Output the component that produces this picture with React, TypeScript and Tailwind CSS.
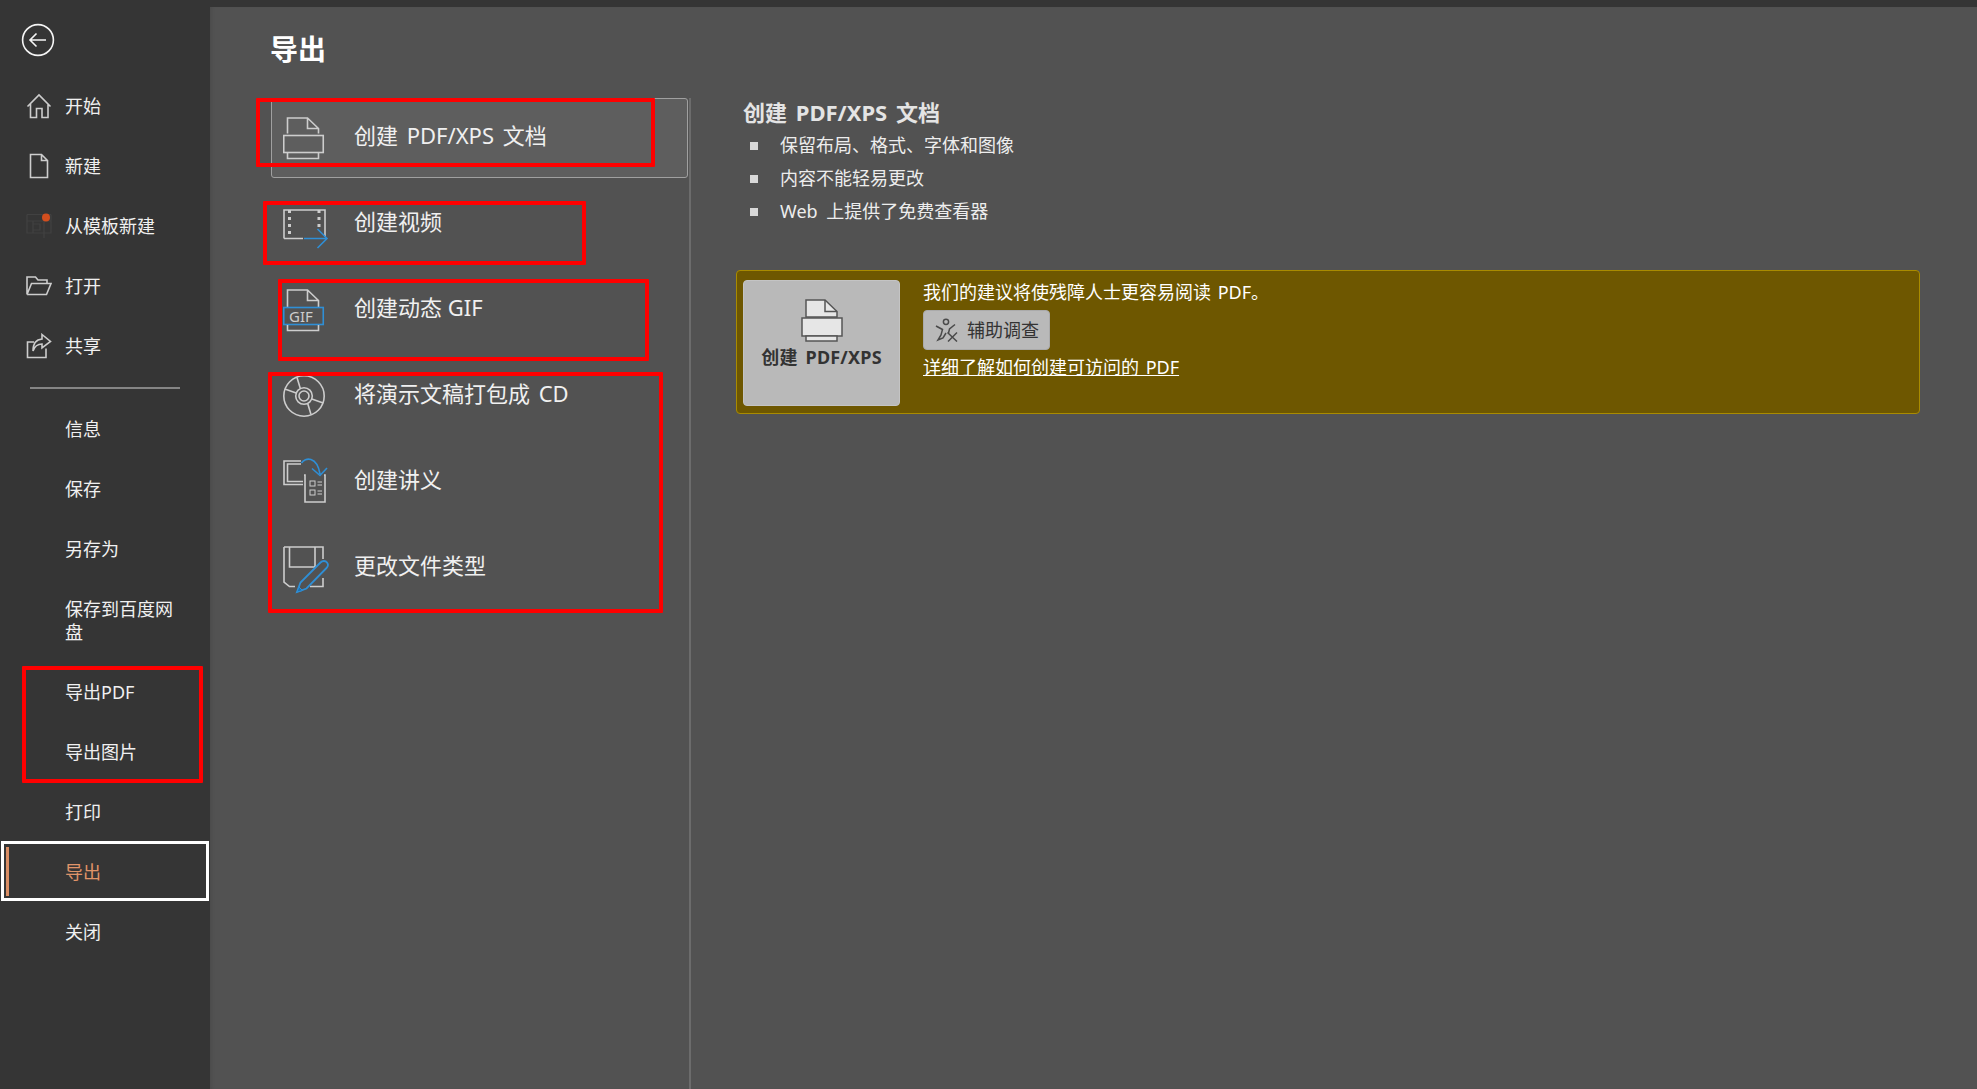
import React from "react";

const FONT = "font-['Noto_Sans','Noto_Sans_CJK_SC',sans-serif]";

const S = { fill: "none", stroke: "#cdcdcd", strokeWidth: 1.6 } as const;
const BLUE = "#2f8fd6";

function Svg({ w, h, className, children }: { w: number; h: number; className?: string; children: React.ReactNode }) {
  return (
    <svg width={w} height={h} viewBox={`0 0 ${w} ${h}`} className={className}>
      {children}
    </svg>
  );
}

const BackIcon = () => (
  <Svg w={34} h={34}>
    <circle cx="17" cy="17" r="15.4" fill="none" stroke="#f5f5f5" strokeWidth="1.6" />
    <path d="M9 17H25M15.5 10.5L9 17L15.5 23.5" fill="none" stroke="#f5f5f5" strokeWidth="1.6" />
  </Svg>
);
const HomeIcon = () => (
  <Svg w={26} h={26}>
    <path d="M1.5 13.5L13 2L24.5 13.5M4.5 11V24.5H10.5V15.5H16V24.5H22V11" {...S} />
  </Svg>
);
const DocIcon = () => (
  <Svg w={26} h={26}>
    <path d="M4.5 1.5H15.5L21.5 7.5V24.5H4.5ZM15.5 1.5V7.5H21.5" {...S} />
  </Svg>
);
const TemplateIcon = () => (
  <Svg w={26} h={26}>
    <path d="M1 1.5H25M1 8H25M1 1.5V20H25V1.5M7 8V20M18 8V25M7 11H14V17H7Z" fill="none" stroke="#414141" strokeWidth="1.2" />
    <circle cx="20" cy="4.5" r="4" fill="#d24e1e" />
  </Svg>
);
const FolderIcon = () => (
  <Svg w={26} h={20}>
    <path d="M1 18.5V1H9.5L12 4H21V7.5M1 18.5H20.5L25 7.5H5.5L1 18.5" {...S} />
  </Svg>
);
const ShareIcon = () => (
  <Svg w={26} h={26}>
    <path d="M8 9H1.5V24.5H20V15.5" {...S} />
    <path d="M16 1.5L24.5 8.5L16 15V11C11 11 8.5 13.5 7 18C7 11 10 6.5 16 6Z" {...S} />
  </Svg>
);

const PrinterIcon = () => (
  <Svg w={44} h={44}>
    <path d="M4.5 16.5V1H24.5L35.5 11.5V16.5M24.5 1V11.5H35.5" {...S} />
    <rect x="0.75" y="18.5" width="39.5" height="17" {...S} />
    <path d="M4.5 36V41.5H35.5V36" {...S} />
  </Svg>
);
const VideoIcon = () => (
  <Svg w={46} h={42}>
    <path d="M1 29.5V1H42V28M1 29.5H20" {...S} />
    <path d="M6.5 1V29M36 1V22" fill="none" stroke="#cdcdcd" strokeWidth="3" strokeDasharray="3 4" />
    <path d="M21 29.5H44M34.5 20L44 29.5L34.5 39" fill="none" stroke={BLUE} strokeWidth="1.6" />
  </Svg>
);
const GifIcon = () => (
  <Svg w={44} h={44}>
    <path d="M4.5 18V1H24.5L35.5 11.5V18M24.5 1V11.5H35.5" {...S} />
    <rect x="0.75" y="18.5" width="39.5" height="17" fill="none" stroke={BLUE} strokeWidth="1.6" />
    <path d="M4.5 36V41.5H35.5V36" {...S} />
    <text x="6" y="32.5" fontSize="15" fill="#cdcdcd" fontFamily="Noto Sans, sans-serif">GIF</text>
  </Svg>
);
const CdIcon = () => (
  <Svg w={44} h={44}>
    <circle cx="21" cy="21" r="20.2" {...S} />
    <circle cx="21" cy="21" r="8.3" {...S} />
    <circle cx="21" cy="21" r="5" {...S} />
    <path d="M14 2.5L17.3 13.5M1.8 14L13.2 18M28 39.5L24.7 28.5M40.2 28L28.8 24" {...S} />
  </Svg>
);
const HandoutIcon = () => (
  <Svg w={46} h={46}>
    <path d="M18 4H1V27.5H20" {...S} />
    <path d="M18 7H4.5V24.5H20" {...S} />
    <path d="M21 18H22V45H42V18H41" {...S} />
    <rect x="27" y="24" width="5" height="5" fill="none" stroke="#cdcdcd" strokeWidth="1" />
    <rect x="27" y="33" width="5" height="5" fill="none" stroke="#cdcdcd" strokeWidth="1" />
    <path d="M34.5 25H39M34.5 28H39M34.5 34H39M34.5 37H39" fill="none" stroke="#cdcdcd" strokeWidth="1" />
    <path d="M18.5 6C22 0 34 -1 37 17M29 11.5L37 18.5L44 11" fill="none" stroke={BLUE} strokeWidth="1.6" />
  </Svg>
);
const SaveEditIcon = () => (
  <Svg w={46} h={48}>
    <path d="M1 1H40V13M40 32V40.5H27M12 40.5H6.5L1 36V1" {...S} />
    <path d="M6.5 1V21H32V1" {...S} />
    <path d="M14 46L17.5 36.5L37.5 16.5C39.5 14.5 42.5 14.5 44 16.5C45.5 18.5 45 20.5 43.5 22L23.5 42.5Z" fill="none" stroke={BLUE} strokeWidth="1.8" />
    <path d="M14 46L16 41L19.5 44.5Z" fill="#1c6fb0" stroke={BLUE} strokeWidth="1" />
  </Svg>
);
const PrinterLight = () => (
  <Svg w={42} h={44}>
    <path d="M5 18V1H24L36 12.5V18Z" fill="#e6e6e6" stroke="#555" strokeWidth="1.5" />
    <path d="M24 1V12.5H36" fill="none" stroke="#555" strokeWidth="1.5" />
    <rect x="1" y="19" width="40" height="18" fill="#e6e6e6" stroke="#555" strokeWidth="1.5" />
    <path d="M5 37V42H36V37Z" fill="#e6e6e6" stroke="#555" strokeWidth="1.5" />
  </Svg>
);
const AccessIcon = () => (
  <Svg w={24} h={24}>
    <circle cx="11" cy="3.8" r="2.6" fill="none" stroke="#4a4a4a" strokeWidth="1.5" />
    <path d="M1 8L7.5 11.5L6 17L3 22L8 20L11 15M20 6.5L14.5 11L13.5 15" fill="none" stroke="#4a4a4a" strokeWidth="1.5" />
    <path d="M12.5 14.5L22 23.5M22 14.5L13 23.5" fill="none" stroke="#4a4a4a" strokeWidth="1.5" />
  </Svg>
);

type NavItem = { label: string; icon?: React.ReactNode; h?: string; active?: boolean };

function NavRow({ label, icon, h, active }: NavItem) {
  return (
    <div className={`relative flex items-center shrink-0 ${h ?? "h-[60px]"}`}>
      {active && <div className="absolute left-[6px] top-[5px] bottom-[6px] w-[3px] bg-[#d98d63]" />}
      {icon && <div className="absolute left-[26px] top-0 bottom-0 flex items-center">{icon}</div>}
      <span className={`pl-[65px] pr-[25px] text-[18px] leading-[23px] ${active ? "text-[#e09469]" : "text-[#f0f0f0]"}`}>
        {label}
      </span>
    </div>
  );
}

type ExportItem = { label: string; icon: React.ReactNode; offset: string; selected?: boolean; textClass?: string };

function ExportRow({ label, icon, offset, selected, textClass }: ExportItem) {
  return (
    <div
      className={`h-[80px] mb-[6px] w-[417px] flex items-start rounded-[3px] border ${
        selected ? "border-[#a0a0a0] bg-[#5e5e5e]" : "border-transparent"
      }`}
    >
      <div className={`w-[82px] pl-[11px] shrink-0 ${offset}`}>{icon}</div>
      <span className={`pt-[21px] text-[22px] leading-[30px] text-[#f0f0f0] ${textClass ?? ""}`}>{label}</span>
    </div>
  );
}

const Bullet = ({ children, textClass }: { children: React.ReactNode; textClass?: string }) => (
  <div className="flex items-center h-[33px]">
    <span className="ml-[14px] w-[8px] h-[8px] bg-[#d8d8d8] shrink-0" />
    <span className={`ml-[22px] text-[18px] text-[#ededed] ${textClass ?? ""}`}>{children}</span>
  </div>
);

export default function App() {
  return (
    <div className={`relative w-[1977px] h-[1089px] overflow-hidden bg-[#353535] flex ${FONT}`}>
      <aside className="w-[210px] shrink-0 flex flex-col bg-[#353535]">
        <div className="h-[76px] pl-[21px] pt-[23px] shrink-0">
          <BackIcon />
        </div>
        <NavRow label="开始" icon={<HomeIcon />} />
        <NavRow label="新建" icon={<DocIcon />} />
        <NavRow label="从模板新建" icon={<TemplateIcon />} />
        <NavRow label="打开" icon={<FolderIcon />} />
        <NavRow label="共享" icon={<ShareIcon />} />
        <div className="h-[23px] shrink-0 pt-[11px] pl-[30px]">
          <div className="w-[150px] h-[2px] bg-[#858585]" />
        </div>
        <NavRow label="信息" />
        <NavRow label="保存" />
        <NavRow label="另存为" />
        <NavRow label="保存到百度网盘" h="h-[83px]" />
        <NavRow label="导出PDF" />
        <NavRow label="导出图片" />
        <NavRow label="打印" />
        <NavRow label="导出" active />
        <NavRow label="关闭" />
      </aside>

      <main className="flex-1 mt-[7px] bg-[#525252] flex flex-col shadow-[inset_4px_0_4px_-3px_rgba(0,0,0,0.12)]">
        <h1 className="h-[91px] shrink-0 pl-[60px] pt-[23px] text-[28px] leading-[38px] font-bold text-white">导出</h1>
        <div className="flex-1 flex pl-[61px]">
          <div className="w-[420px] shrink-0 border-r-2 border-[#6c6c6c]">
            <ExportRow label="创建 PDF/XPS 文档" icon={<PrinterIcon />} offset="pt-[18px]" selected textClass="[word-spacing:3px]" />
            <ExportRow label="创建视频" icon={<VideoIcon />} offset="pt-[24px]" />
            <ExportRow label="创建动态 GIF" icon={<GifIcon />} offset="pt-[18px]" />
            <ExportRow label="将演示文稿打包成 CD" icon={<CdIcon />} offset="pt-[18px]" textClass="[word-spacing:3px]" />
            <ExportRow label="创建讲义" icon={<HandoutIcon />} offset="pt-[14px]" />
            <ExportRow label="更改文件类型" icon={<SaveEditIcon />} offset="pt-[17px]" />
          </div>

          <div className="flex-1 pl-[45px] pr-[57px]">
            <h2 className="pl-[7px] text-[22px] leading-[28px] font-bold text-[#e4e4e4] [word-spacing:3px]">创建 PDF/XPS 文档</h2>
            <div className="mt-[3px]">
              <Bullet>保留布局、格式、字体和图像</Bullet>
              <Bullet>内容不能轻易更改</Bullet>
              <Bullet textClass="[word-spacing:4px]">Web 上提供了免费查看器</Bullet>
            </div>
            <div className="mt-[42px] h-[144px] rounded-[4px] border border-[#a98b00] bg-[#6e5700] flex pl-[6px] pt-[9px]">
              <div className="w-[157px] h-[126px] rounded-[4px] border border-[#c4c4c4] bg-[#b9b9b9] flex flex-col items-center pt-[18px]">
                <PrinterLight />
                <span className="text-[18px] leading-[28px] font-bold text-[#333] [word-spacing:3px] tracking-[0.2px]">创建 PDF/XPS</span>
              </div>
              <div className="ml-[23px] flex flex-col items-start">
                <p className="text-[18px] leading-[24px] text-white [word-spacing:2px]">我们的建议将使残障人士更容易阅读 PDF。</p>
                <button className="mt-[6px] w-[127px] h-[40px] rounded-[4px] border border-[#aaa] bg-[#b9b9b9] flex items-center pl-[11px] text-[18px] text-[#333]">
                  <AccessIcon />
                  <span className="ml-[8px]">辅助调查</span>
                </button>
                <a className="mt-[4px] text-[18px] leading-[26px] text-white underline [word-spacing:2px]">详细了解如何创建可访问的 PDF</a>
              </div>
            </div>
          </div>
        </div>
      </main>

      {/* Annotation rectangles drawn over the screenshot */}
      <div className="absolute left-[256px] top-[98px] w-[399px] h-[69px] border-[4px] border-[#ff0000] rounded-[1px]" />
      <div className="absolute left-[263px] top-[201px] w-[323px] h-[64px] border-[4px] border-[#ff0000] rounded-[1px]" />
      <div className="absolute left-[278px] top-[279px] w-[371px] h-[82px] border-[4px] border-[#ff0000] rounded-[1px]" />
      <div className="absolute left-[268px] top-[372px] w-[395px] h-[241px] border-[4px] border-[#ff0000] rounded-[1px]" />
      <div className="absolute left-[22px] top-[666px] w-[181px] h-[117px] border-[4px] border-[#ff0000] rounded-[1px]" />
      <div className="absolute left-[1px] top-[841px] w-[208px] h-[60px] border-[3px] border-white" />
    </div>
  );
}
